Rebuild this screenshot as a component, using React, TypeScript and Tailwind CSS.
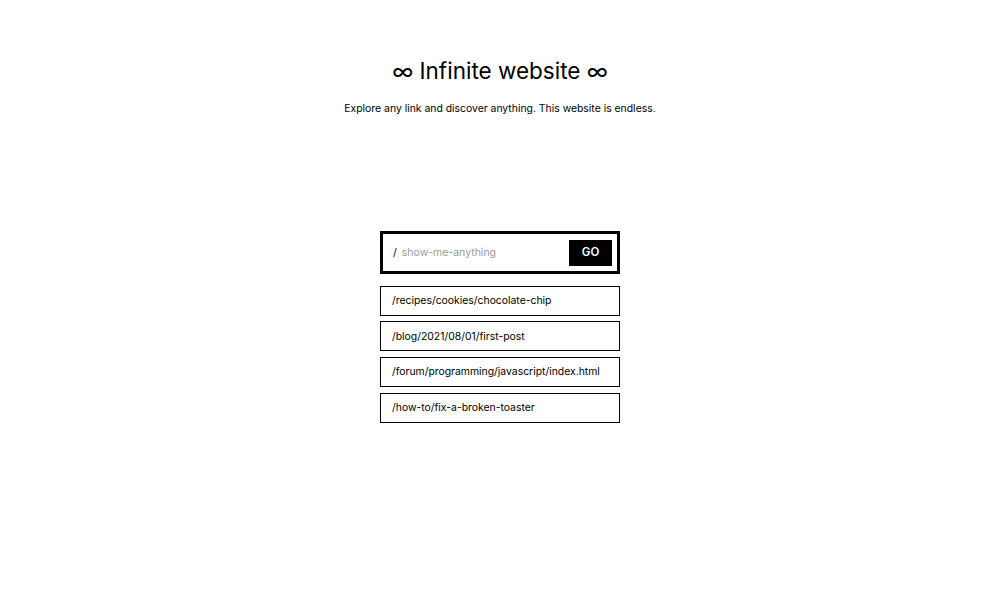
import { useState } from 'react';

const links = [
    '/recipes/cookies/chocolate-chip',
    '/blog/2021/08/01/first-post',
    '/forum/programming/javascript/index.html',
    '/how-to/fix-a-broken-toaster',
];

export default function App() {
    const [path, setPath] = useState('');

    return (
        <div className="min-h-screen bg-white text-black flex flex-col items-center font-['Inter',sans-serif]">
            <h1 className="mt-[56px] text-[22.5px] leading-[30px] font-normal">∞ Infinite website ∞</h1>
            <p className="mt-[16px] text-[10.4px] leading-[14px]">
                Explore any link and discover anything. This website is endless.
            </p>

            <div className="mt-[115px] w-[240px] flex flex-col gap-[5.7px]">
                <form
                    onSubmit={(e) => e.preventDefault()}
                    className="h-[43px] border-[3px] border-black flex items-center pl-[10px] pr-[5px] pt-[1px] mb-[6px]"
                >
                    <span className="text-[10.5px] mr-[5px]">/</span>
                    <input
                        value={path}
                        onChange={(e) => setPath(e.target.value)}
                        placeholder="show-me-anything"
                        className="flex-1 min-w-0 text-[10.5px] outline-none placeholder:text-[#9a9a9a]"
                    />
                    <button
                        type="submit"
                        className="w-[43px] h-[26px] bg-black text-white text-[11.5px] font-semibold"
                    >
                        GO
                    </button>
                </form>

                {links.map((link) => (
                    <a
                        key={link}
                        href="#"
                        className="h-[30px] border border-black flex items-center px-[11px] text-[10.4px]"
                    >
                        {link}
                    </a>
                ))}
            </div>
        </div>
    );
}
